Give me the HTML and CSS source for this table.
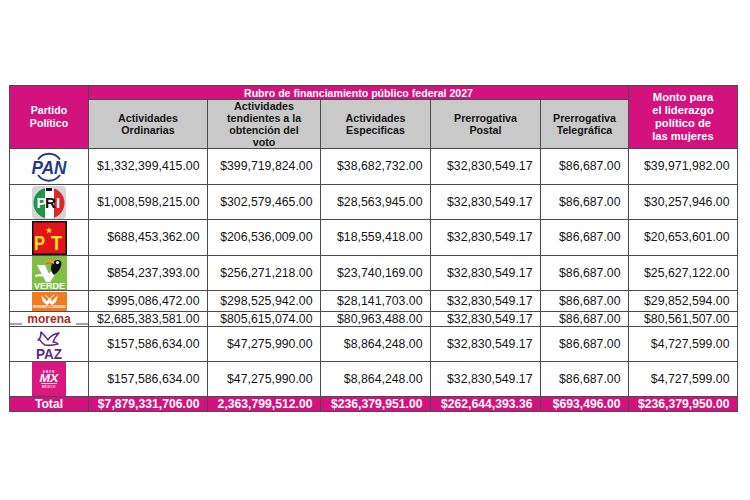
FILE: index.html
```html
<!DOCTYPE html>
<html lang="es">
<head>
<meta charset="utf-8">
<title>Rubro de financiamiento público federal 2027</title>
<link rel="stylesheet" href="styles.css">
</head>
<body>
<table class="budget">
  <colgroup>
    <col class="c-party"><col class="c-ord"><col class="c-vote"><col class="c-spec"><col class="c-post"><col class="c-tel"><col class="c-women">
  </colgroup>
  <thead>
    <tr class="r-top">
      <th rowspan="2" class="h-pink h-party">Partido<br>Político</th>
      <th colspan="5" class="h-pink h-rubro">Rubro de financiamiento público federal 2027</th>
      <th rowspan="2" class="h-pink h-women">Monto para<br>el liderazgo<br>político de<br>las mujeres</th>
    </tr>
    <tr class="r-sub">
      <th class="h-gray">Actividades<br>Ordinarias</th>
      <th class="h-gray">Actividades<br>tendientes a la<br>obtención del<br>voto</th>
      <th class="h-gray">Actividades<br>Especificas</th>
      <th class="h-gray">Prerrogativa<br>Postal</th>
      <th class="h-gray">Prerrogativa<br>Telegráfica</th>
    </tr>
  </thead>
  <tbody>
    <tr class="r-36">
      <td class="party">
        <svg class="logo" width="38" height="32" viewBox="0 0 38 32" aria-label="PAN">
          <path d="M8 8.5 A13.5 13.5 0 0 1 30 8.5" fill="none" stroke="#1f3b87" stroke-width="2"/>
          <path d="M8 24 A13.5 13.5 0 0 0 30 24" fill="none" stroke="#1f3b87" stroke-width="2"/>
          <text x="19" y="22.5" text-anchor="middle" font-family="Liberation Sans, sans-serif" font-weight="bold" font-style="italic" font-size="18" fill="#1f3b87" textLength="35" lengthAdjust="spacingAndGlyphs">PAN</text>
        </svg>
      </td>
      <td>$1,332,399,415.00</td><td>$399,719,824.00</td><td>$38,682,732.00</td><td>$32,830,549.17</td><td>$86,687.00</td><td>$39,971,982.00</td>
    </tr>
    <tr class="r-35">
      <td class="party">
        <svg class="logo" width="34" height="33" viewBox="0 0 34 33" aria-label="PRI">
          <defs><clipPath id="pri-c"><circle cx="17" cy="17" r="15.5"/></clipPath></defs>
          <rect width="34" height="33" rx="4" fill="#d6d6d6"/>
          <g clip-path="url(#pri-c)">
            <rect x="0" y="0" width="13" height="33" fill="#1f9447"/>
            <rect x="13" y="0" width="9" height="33" fill="#ffffff"/>
            <rect x="22" y="0" width="12" height="33" fill="#e0262d"/>
          </g>
          <rect x="14" y="2" width="6" height="3" fill="#111"/>
          <text y="22" font-family="Liberation Sans, sans-serif" font-weight="bold" font-size="15"><tspan x="4.5" fill="#fff">P</tspan><tspan x="13" fill="#111">R</tspan><tspan x="24" fill="#fff">I</tspan></text>
        </svg>
      </td>
      <td>$1,008,598,215.00</td><td>$302,579,465.00</td><td>$28,563,945.00</td><td>$32,830,549.17</td><td>$86,687.00</td><td>$30,257,946.00</td>
    </tr>
    <tr class="r-36">
      <td class="party">
        <svg class="logo" width="35" height="34" viewBox="0 0 35 34" aria-label="PT">
          <rect x="0.75" y="0.75" width="33.5" height="32.5" fill="#e1141c" stroke="#111" stroke-width="1.5"/>
          <polygon points="17,6 17.9,8.4 20.4,8.5 18.4,10 19.1,12.4 17,11 14.9,12.4 15.6,10 13.6,8.5 16.1,8.4" fill="#ffe21a"/>
          <text x="7.5" y="28.5" text-anchor="middle" font-family="Liberation Sans, sans-serif" font-weight="bold" font-size="21" fill="#ffe21a" textLength="11" lengthAdjust="spacingAndGlyphs">P</text>
          <text x="24.5" y="28.5" text-anchor="middle" font-family="Liberation Sans, sans-serif" font-weight="bold" font-size="21" fill="#ffe21a" textLength="11" lengthAdjust="spacingAndGlyphs">T</text>
        </svg>
      </td>
      <td>$688,453,362.00</td><td>$206,536,009.00</td><td>$18,559,418.00</td><td>$32,830,549.17</td><td>$86,687.00</td><td>$20,653,601.00</td>
    </tr>
    <tr class="r-35">
      <td class="party">
        <svg class="logo" width="35" height="34" viewBox="0 0 35 34" aria-label="Verde">
          <rect width="35" height="34" fill="#7fbf45"/>
          <path d="M5 9 L13 9 L17 18 L24 8 L28 11 L18 26 L14 26 Z" fill="#ffffff"/>
          <path d="M19 13 C19 7 22 4 26 4 C29 4 30 7 29 10 C28 14 25 17 22 19 C20 17 19 15 19 13 Z" fill="#111"/>
          <circle cx="25.5" cy="6.5" r="1.6" fill="#fff"/>
          <path d="M22 5 C17 3 14 5 13 8 C16 6 19 7 22 8 Z" fill="#f7a21b"/>
          <path d="M14 7.5 C16 6.5 18 6.8 21 7.6" stroke="#e5321c" stroke-width="0.8" fill="none"/>
          <path d="M3 19 C9 17 15 18 22 22 C16 21 9 20 3 21 Z" fill="#ffffff" opacity="0.9"/>
          <text x="17.5" y="33" text-anchor="middle" font-family="Liberation Sans, sans-serif" font-weight="bold" font-size="9.5" fill="#fff" textLength="31" lengthAdjust="spacingAndGlyphs">VERDE</text>
        </svg>
      </td>
      <td>$854,237,393.00</td><td>$256,271,218.00</td><td>$23,740,169.00</td><td>$32,830,549.17</td><td>$86,687.00</td><td>$25,627,122.00</td>
    </tr>
    <tr class="r-21">
      <td class="party">
        <svg class="logo" width="35" height="19" viewBox="0 0 35 19" aria-label="Movimiento Ciudadano">
          <rect width="35" height="19" fill="#f07c22"/>
          <path d="M9 3 L15 9 L17.5 6 L20 9 L26 3 L24 10 L20 13 L17.5 11 L15 13 L11 10 Z" fill="#fff"/>
          <path d="M13 3 L17.5 7 L22 3" stroke="#fff" stroke-width="1" fill="none"/>
          <text x="17.5" y="16" text-anchor="middle" font-family="Liberation Sans, sans-serif" font-weight="bold" font-size="2.6" fill="#fff">MOVIMIENTO CIUDADANO</text>
        </svg>
      </td>
      <td>$995,086,472.00</td><td>$298,525,942.00</td><td>$28,141,703.00</td><td>$32,830,549.17</td><td>$86,687.00</td><td>$29,852,594.00</td>
    </tr>
    <tr class="r-15">
      <td class="party party-morena"><span class="morena">morena</span></td>
      <td>$2,685,383,581.00</td><td>$805,615,074.00</td><td>$80,963,488.00</td><td>$32,830,549.17</td><td>$86,687.00</td><td>$80,561,507.00</td>
    </tr>
    <tr class="r-35">
      <td class="party">
        <svg class="logo" width="34" height="31" viewBox="0 0 34 31" aria-label="PAZ">
          <path d="M9 3 C12 6 14 8 16 11 C18 7 22 5 27 4 C24 7 22 10 21 13 C23 13 25 14 26 15 C22 16 17 17 13 16 C11 15 9 13 8 11 L6 11 L8 9 C9 7 9 5 9 3 Z" fill="none" stroke="#5e2a84" stroke-width="1.6" stroke-linejoin="round"/>
          <text x="17" y="29.5" text-anchor="middle" font-family="Liberation Sans, sans-serif" font-weight="bold" font-size="14" fill="#5e2a84" textLength="26" lengthAdjust="spacingAndGlyphs">PAZ</text>
        </svg>
      </td>
      <td>$157,586,634.00</td><td>$47,275,990.00</td><td>$8,864,248.00</td><td>$32,830,549.17</td><td>$86,687.00</td><td>$4,727,599.00</td>
    </tr>
    <tr class="r-35">
      <td class="party">
        <svg class="logo" width="34" height="34" viewBox="0 0 34 34" aria-label="México">
          <rect width="34" height="34" fill="#d9177f"/>
          <text x="17" y="10.5" text-anchor="middle" font-family="Liberation Sans, sans-serif" font-weight="bold" font-size="2.8" fill="#fff" letter-spacing="1">AMOR</text>
          <text x="17" y="20" text-anchor="middle" font-family="Liberation Sans, sans-serif" font-weight="bold" font-style="italic" font-size="11" fill="#fff" textLength="19" lengthAdjust="spacingAndGlyphs">MX</text>
          <path d="M9 21.5 L25 21.5" stroke="#fff" stroke-width="0.8"/>
          <text x="17" y="25.5" text-anchor="middle" font-family="Liberation Sans, sans-serif" font-weight="bold" font-size="2.6" fill="#fff" letter-spacing="0.6">MÉXICO</text>
        </svg>
      </td>
      <td>$157,586,634.00</td><td>$47,275,990.00</td><td>$8,864,248.00</td><td>$32,830,549.17</td><td>$86,687.00</td><td>$4,727,599.00</td>
    </tr>
    <tr class="r-total">
      <td class="t-label">Total</td>
      <td>$7,879,331,706.00</td><td>2,363,799,512.00</td><td>$236,379,951.00</td><td>$262,644,393.36</td><td>$693,496.00</td><td>$236,379,950.00</td>
    </tr>
  </tbody>
</table>
</body>
</html>
```
FILE: styles.css
```css
* { box-sizing: border-box; }

html, body {
  margin: 0;
  background: #ffffff;
}

body {
  padding: 85px 0 0 9px;
  font-family: "Liberation Sans", Arial, sans-serif;
  color: #141414;
}

.budget {
  border-collapse: collapse;
  table-layout: fixed;
  width: 729px;
}

.c-party { width: 79px; }
.c-ord { width: 119px; }
.c-vote { width: 113px; }
.c-spec { width: 110px; }
.c-post { width: 110px; }
.c-tel { width: 88px; }
.c-women { width: 109px; }

.budget th,
.budget td {
  border: 1px solid #4b4b4b;
  padding: 0;
  vertical-align: middle;
}

.budget td {
  text-align: right;
  padding-right: 7.5px;
  font-size: 12.3px;
  line-height: 13px;
  white-space: nowrap;
}

.r-top th { height: 14px; }
.r-sub th { height: 49px; }
.r-36 td { height: 36px; }
.r-35 td { height: 35px; }
.r-21 td { height: 21px; }
.r-15 td { height: 15px; }
.r-total td { height: 15px; }

.h-pink {
  background: #d4127e;
  color: #ffffff;
  font-weight: bold;
}

.h-party {
  font-size: 10.6px;
  line-height: 13px;
}

.h-rubro {
  font-size: 10.6px;
  line-height: 12px;
}

.h-women {
  font-size: 11.2px;
  line-height: 12.9px;
  padding-bottom: 4px;
}

.h-gray {
  background: #c9c9c9;
  color: #151515;
  font-weight: bold;
  font-size: 10.7px;
  line-height: 12px;
}

.budget td.party {
  text-align: center;
  padding: 0;
  line-height: 0;
}

.logo {
  display: block;
  margin: 0 auto;
}

.budget td.party-morena {
  line-height: 13px;
  background: linear-gradient(#ffffff 0 11px, #4b4b4b 11px 12px, #ffffff 12px);
}

.morena {
  display: inline-block;
  background: #ffffff;
  padding: 0 5px;
  color: #ad2a22;
  font-weight: bold;
  font-size: 12px;
  line-height: 13px;
}

.r-total td {
  background: #d4127e;
  color: #ffffff;
  font-weight: bold;
  font-size: 12.2px;
  line-height: 13px;
}

.budget td.t-label {
  text-align: center;
  padding-right: 0;
  font-size: 12.2px;
}
```
